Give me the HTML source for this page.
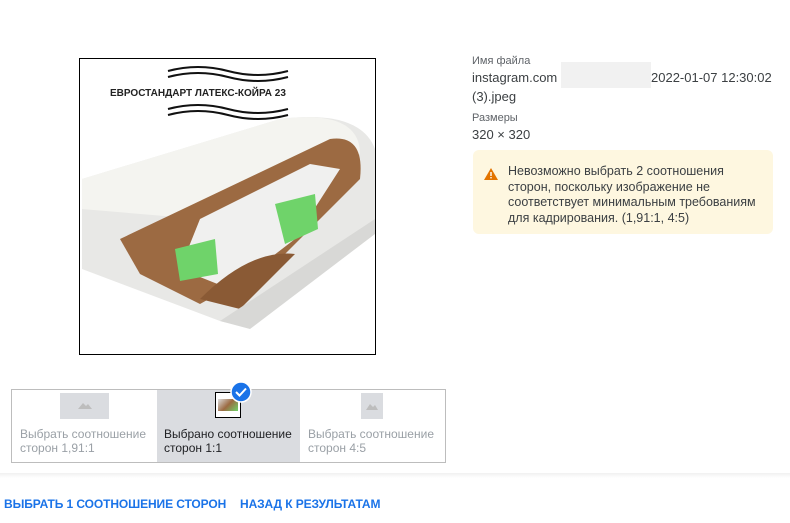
<!DOCTYPE html>
<html><head><meta charset="utf-8"><style>
body{margin:0;width:790px;height:523px;background:#fff;font-family:"Liberation Sans",sans-serif;position:relative;overflow:hidden}
.a{position:absolute}
.lbl{font-size:11px;color:#5f6368}
.val{font-size:13px;color:#3c4043}
</style></head><body>
<div class="a" style="left:79px;top:58px;width:295px;height:295px;border:1px solid #000;background:#fff;overflow:hidden">
<svg width="295" height="295" viewBox="0 0 295 295">
<path d="M88 12 q30 -8 60 0 t60 0" stroke="#111" stroke-width="2" fill="none"/>
<path d="M88 18 q30 -8 60 0 t60 0" stroke="#111" stroke-width="2" fill="none"/>
<text x="30" y="37" font-family="Liberation Sans" font-size="10" font-weight="bold" fill="#222">ЕВРОСТАНДАРТ ЛАТЕКС-КОЙРА 23</text>
<path d="M88 50 q30 -8 60 0 t60 0" stroke="#111" stroke-width="2" fill="none"/>
<path d="M88 56 q30 -8 60 0 t60 0" stroke="#111" stroke-width="2" fill="none"/>
<path d="M2 120 L200 60 Q280 50 295 90 L295 160 L170 260 Q160 268 140 262 L2 210 Z" fill="#e8e8e6"/>
<path d="M2 120 L200 60 Q280 50 280 95 L120 160 L2 150 Z" fill="#f4f4f0"/>
<path d="M40 180 L250 80 Q285 75 280 120 L200 200 L120 245 L60 215 Z" fill="#9c6a42"/>
<path d="M120 160 L230 105 L260 110 L215 180 L150 230 L100 210 Z" fill="#f0f0ef"/>
<path d="M195 145 L235 135 L238 170 L205 185 Z" fill="#6fd36a"/>
<path d="M95 190 L135 180 L138 215 L100 222 Z" fill="#6fd36a"/>
<path d="M120 240 Q170 190 215 195 L160 250 Z" fill="#8a5a35"/>
<path d="M140 262 L295 160 L295 175 L170 270 Z" fill="#d8d8d6"/>
</svg></div>
<div class="a lbl" style="left:472px;top:55px">Имя файла</div>
<div class="a val" style="left:472px;top:70px">instagram.com s</div>
<div class="a" style="left:561px;top:62px;width:90px;height:26px;background:#f1f1f1"></div>
<div class="a val" style="left:651px;top:70px">2022-01-07 12:30:02</div>
<div class="a val" style="left:472px;top:89px">(3).jpeg</div>
<div class="a lbl" style="left:472px;top:112px">Размеры</div>
<div class="a val" style="left:472px;top:127px">320 × 320</div>
<div class="a" style="left:473px;top:150px;width:300px;height:84px;background:#fef7e0;border-radius:6px"></div>
<svg class="a" style="left:483px;top:167px" width="16" height="14"><path d="M8 1 L15 13 L1 13 Z" fill="#e37400"/><rect x="7.3" y="5" width="1.4" height="4" fill="#fff"/><rect x="7.3" y="10" width="1.4" height="1.4" fill="#fff"/></svg>
<div class="a" style="left:508px;top:164px;width:260px;font-size:12.5px;line-height:15.5px;color:#3c4043">Невозможно выбрать 2 соотношения сторон, поскольку изображение не соответствует минимальным требованиям для кадрирования. (1,91:1, 4:5)</div>
<div class="a" style="left:11px;top:389px;width:433px;height:72px;border:1px solid #bdbdbd"></div>
<div class="a" style="left:157px;top:390px;width:143px;height:72px;background:#dadce0"></div>
<div class="a" style="left:60px;top:393px;width:49px;height:26px;background:#dadce0"></div>
<svg class="a" style="left:78px;top:400px" width="14" height="10"><path d="M0 9 L5 3 L8 6 L10 4 L14 9 Z" fill="#bdbdbd"/></svg>
<div class="a" style="left:361px;top:393px;width:22px;height:26px;background:#dadce0"></div>
<svg class="a" style="left:366px;top:402px" width="12" height="8"><path d="M0 8 L4 2 L7 5 L9 3 L12 8 Z" fill="#bdbdbd"/></svg>
<div class="a" style="left:215px;top:392px;width:26px;height:26px;background:#fff;border:1px solid #000;box-sizing:border-box"><div style="margin:6px 2px;height:12px;background:linear-gradient(135deg,#ddd,#9c6a42 50%,#6fd36a)"></div></div>
<svg class="a" style="left:230px;top:381px" width="22" height="22"><circle cx="11" cy="11" r="10" fill="#1a73e8" stroke="#fff" stroke-width="1.5"/><path d="M6 11 l3.5 3.5 l6.5 -7" stroke="#fff" stroke-width="2" fill="none"/></svg>
<div class="a" style="left:20px;top:427px;font-size:12px;line-height:14px;color:#9aa0a6">Выбрать соотношение<br>сторон 1,91:1</div>
<div class="a" style="left:164px;top:427px;font-size:12px;line-height:14px;color:#202124">Выбрано соотношение<br>сторон 1:1</div>
<div class="a" style="left:308px;top:427px;font-size:12px;line-height:14px;color:#9aa0a6">Выбрать соотношение<br>сторон 4:5</div>
<div class="a" style="left:0;top:473px;width:790px;height:5px;background:linear-gradient(#f1f1f1,#fff)"></div>
<div class="a" style="left:4px;top:497px;font-size:12px;font-weight:bold;letter-spacing:-0.1px;color:#1a73e8">ВЫБРАТЬ 1 СООТНОШЕНИЕ СТОРОН</div>
<div class="a" style="left:240px;top:497px;font-size:12px;font-weight:bold;letter-spacing:-0.1px;color:#1a73e8">НАЗАД К РЕЗУЛЬТАТАМ</div>
</body></html>
